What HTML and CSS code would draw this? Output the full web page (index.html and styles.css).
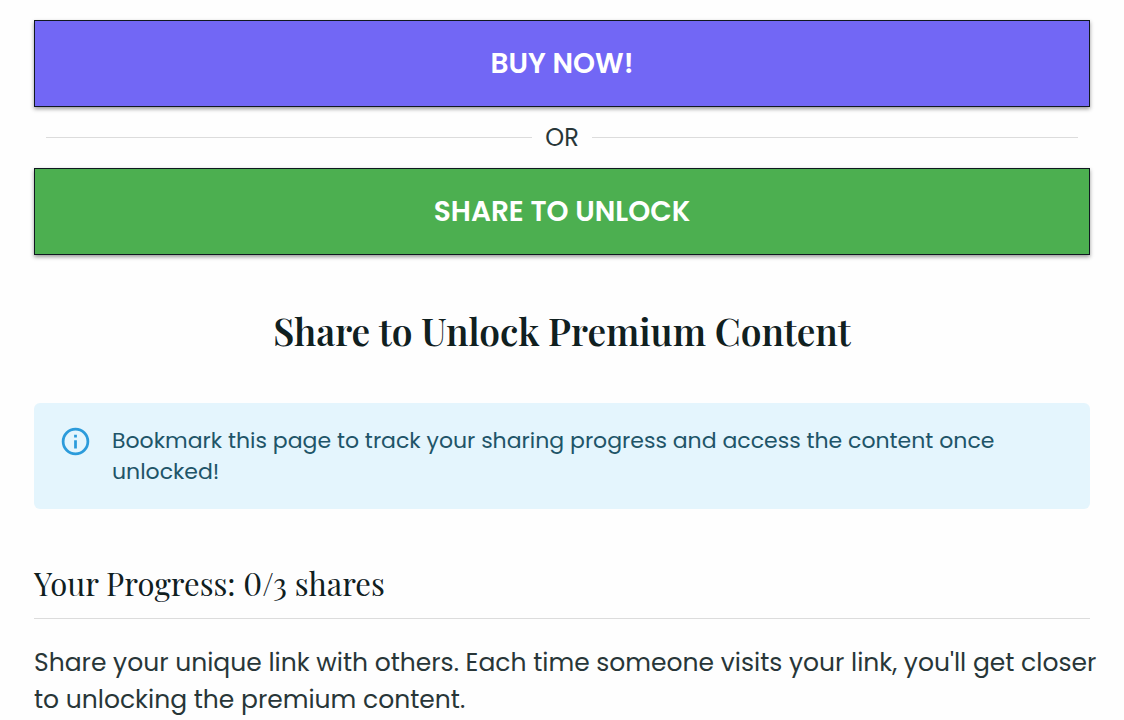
FILE: index.html
```html
<!DOCTYPE html>
<html lang="en">
<head>
<meta charset="utf-8">
<meta name="viewport" content="width=device-width, initial-scale=1">
<title>Share to Unlock</title>
<link rel="stylesheet" href="styles.css">
</head>
<body>
<main class="page">
  <button class="action action-buy" type="button">BUY NOW!</button>
  <div class="divider"><span>OR</span></div>
  <button class="action action-share" type="button">SHARE TO UNLOCK</button>
  <h1 class="title">Share to Unlock Premium Content</h1>
  <div class="notice" role="note">
    <svg class="notice-icon" viewBox="0 0 24 24" aria-hidden="true"><path d="M11 7h2v2h-2zM11 11h2v6h-2zM12 2a10 10 0 1 0 0 20a10 10 0 0 0 0-20zm0 18a8 8 0 1 1 0-16a8 8 0 0 1 0 16z"/></svg>
    <p class="notice-text">Bookmark this page to track your sharing progress and access the content once unlocked!</p>
  </div>
  <h2 class="progress">Your Progress: <span class="count">0</span>/3 shares</h2>
  <p class="description">Share your unique link with others. Each time someone visits your link, you'll get closer to unlocking the premium content.</p>
</main>
</body>
</html>
```
FILE: styles.css
```css
* {
  box-sizing: border-box;
}

body {
  margin: 0;
  background: #fefefe;
  color: #283638;
  font-family: Poppins, Inter, "Liberation Sans", sans-serif;
  font-size: 24px;
  line-height: 37px;
}

.page {
  display: flex;
  flex-direction: column;
  padding: 20px 34px 0;
}

.action {
  width: 100%;
  padding: 25px;
  border: 1px solid #101820;
  box-shadow: 0 2px 4px rgba(0, 0, 0, 0.4);
  color: #fff;
  font: inherit;
  font-size: 28px;
  font-weight: 600;
  line-height: 35px;
  cursor: pointer;
}

.action-buy {
  background: #7267f5;
}

.action-share {
  background: #4caf50;
}

.divider {
  display: flex;
  align-items: center;
  gap: 13px;
  padding: 12px;
}

.divider::before,
.divider::after {
  content: "";
  flex: 1;
  height: 1px;
  background: #dcdcdc;
}

.title,
.progress {
  margin: 0;
  color: #10201f;
  font-family: "Playfair Display", "Liberation Serif", serif;
}

.title {
  margin: 51px 0 47px;
  font-size: 37px;
  font-weight: 600;
  line-height: 50px;
  text-align: center;
}

.notice {
  display: flex;
  gap: 20px;
  padding: 22px 25px;
  border-radius: 6px;
  background: #e4f5fd;
  color: #205468;
}

.notice-icon {
  flex: none;
  width: 33px;
  height: 33px;
  fill: #2b9bdb;
}

.notice-text {
  flex: 1;
  margin: 0;
  font-size: 22px;
  line-height: 31px;
}

.progress {
  margin-top: 50px;
  padding: 4px 0 15px;
  border-bottom: 1px solid #dcdcdc;
  font-size: 31px;
  font-weight: 400;
  line-height: 40px;
}

.count {
  font-variant-numeric: lining-nums;
}

.description {
  margin: 25px -12px 0 0;
  font-size: 25px;
}
```
